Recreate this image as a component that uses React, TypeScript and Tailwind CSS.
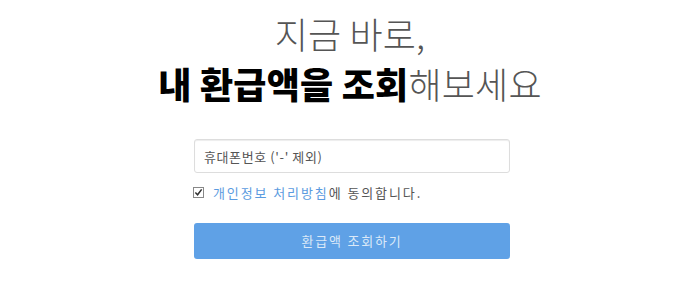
const App = () => {
  return (
    <div
      className="w-[700px] h-[284px] bg-white flex flex-col items-center"
      style={{ fontFamily: '"Noto Sans CJK KR", "Noto Sans", sans-serif' }}
    >
      <h1 className="mt-[8px] text-center text-[36px] leading-[50px] tracking-[0.2px]">
        <span className="block font-light text-[#555]">지금 바로,</span>
        <span className="block">
          <strong className="font-black text-black">내 환급액을 조회</strong>
          <span className="font-light text-[#555]">해보세요</span>
        </span>
      </h1>

      <form className="mt-[31px] ml-[4px] w-[316px] flex flex-col">
        <input
          type="text"
          placeholder="휴대폰번호 ('-' 제외)"
          className="h-[34px] w-full rounded-[3px] border border-[#ddd] px-[9px] text-[13px] tracking-[0.6px] text-[#555] placeholder:text-[#555] shadow-[inset_0_1px_1px_rgba(0,0,0,0.075)] outline-none"
        />
        <label className="mt-[10px] flex items-center gap-[9px] text-[13px] tracking-[1.9px] text-[#555]">
          <span className="ml-[-1px] w-[11px] h-[11px] border border-[#888] bg-white flex items-center justify-center">
            <svg viewBox="0 0 10 10" className="w-[9px] h-[9px]">
              <path d="M1.5 5 L4 7.5 L8.5 1.5" fill="none" stroke="#333" strokeWidth="1.7" />
            </svg>
          </span>
          <span>
            <a className="text-[#5b9be0]">개인정보 처리방침</a>에 동의합니다.
          </span>
        </label>
        <button
          type="button"
          className="mt-[20px] h-[36px] w-full rounded-[3px] bg-[#5fa1e6] text-[13px] tracking-[1.8px] text-[#dbe9f8]"
        >
          환급액 조회하기
        </button>
      </form>
    </div>
  );
};

export default App;
